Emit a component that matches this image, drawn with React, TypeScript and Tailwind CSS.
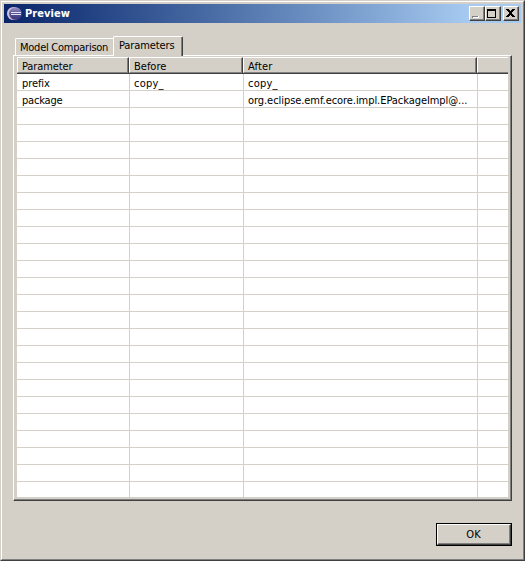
import React from 'react';

const labels = ['Parameter', 'Before', 'After', ''];
const values = [
  ['prefix', 'copy_', 'copy_', ''],
  ['package', '', 'org.eclipse.emf.ecore.impl.EPackageImpl@...', ''],
];
const rows = Array.from({ length: 25 }, (_, i) => values[i] ?? ['', '', '', '']);
const columns = 'grid grid-cols-[112px_114px_234px_31px]';
const spacing: Record<string, string> = {
  Parameter: 'tracking-[-0.12px]',
  Before: 'tracking-[0px]',
  After: 'tracking-[0.15px]',
  package: 'tracking-[-0.18px]',
  prefix: 'tracking-[-0.1px]',
  copy_: 'tracking-[0.2px]',
};

function Label({ text }: { text: string }) {
  return <span className={`block whitespace-pre ${spacing[text] ?? 'tracking-[-0.06px]'}`}>{text}</span>;
}

function CaptionButton({ children }: { children: React.ReactNode }) {
  return (
    <div className="h-[15px] w-4 border border-t-white border-l-white border-r-[#404040] border-b-[#404040] bg-[#d4d0c8]">
      <div className="h-full w-full border-r border-b border-[#808080]">
        <svg width="13" height="12" viewBox="0 0 13 12" shapeRendering="crispEdges" className="block">
          {children}
        </svg>
      </div>
    </div>
  );
}

function Logo() {
  return (
    <svg width="16" height="15" viewBox="0 0 16 15" className="block">
      <defs>
        <linearGradient id="sphere" x1="0" y1="0" x2="0" y2="1">
          <stop offset="0" stopColor="#9d96c8" />
          <stop offset="0.5" stopColor="#5b529a" />
          <stop offset="1" stopColor="#3a3478" />
        </linearGradient>
      </defs>
      <circle cx="6.6" cy="7.5" r="6.6" fill="#cfc3dc" />
      <circle cx="8.4" cy="7.5" r="6.3" fill="url(#sphere)" />
      <path d="M4 6h10v1H4zM4 8h10v1H4z" fill="#dfe4f6" />
    </svg>
  );
}

export default function App() {
  return (
    <div className="h-[561px] w-[525px] overflow-hidden border border-t-[#d4d0c8] border-l-[#d4d0c8] border-r-[#404040] border-b-[#404040] bg-[#d4d0c8] font-['DejaVu_Sans_Condensed','DejaVu_Sans',sans-serif] text-[11px] leading-[13px] text-black [font-stretch:condensed]">
      <div className="flex h-full flex-col border border-t-white border-l-white border-r-[#808080] border-b-[#808080] pt-0.5">
        <div className="mr-0.5 ml-0.5 flex h-[19px] shrink-0 items-start bg-linear-to-r from-[#0a246a] to-[#a6caf0] to-[90%] pt-0.5 pr-0.5 pl-[3px]">
          <Logo />
          <span className="mt-px ml-0.5 grow text-[11px] font-bold tracking-[0.05px] text-white">Preview</span>
          <CaptionButton>
            <path d="M2 9h6v2h-6z" fill="#808080" />
            <path d="M3 11h6v-2h-1v1h-5z" fill="#fff" />
            <path d="M2 9h6v1h-6z" fill="#808080" />
          </CaptionButton>
          <CaptionButton>
            <path d="M1 2h9v9h-9zM2 4v6h7v-6z" fillRule="evenodd" fill="#000" />
          </CaptionButton>
          <div className="ml-0.5">
            <CaptionButton>
              <path d="M2 2h3v1h1v1h1v-1h1v-1h3v1h-1v1h-1v1h-1v2h1v1h1v1h1v1h-3v-1h-1v-1h-1v1h-1v1h-3v-1h1v-1h1v-1h1v-2h-1v-1h-1v-1h-1z" fill="#000" />
            </CaptionButton>
          </div>
        </div>

        <div className="mt-[13px] flex h-5 shrink-0 items-end pl-[13px]">
          <div className="mb-px h-[17px] w-[98px] rounded-tl-[2px] border-t border-l border-white pt-[2px] pl-1">
            <span className="block whitespace-pre tracking-[-0.25px]">Model Comparison</span>
          </div>
          <div className="z-10 h-5 w-[70px] rounded-t-[2px] border-t border-r border-l border-t-white border-r-[#404040] border-l-white bg-[#d4d0c8]">
            <div className="h-full border-r border-[#808080] pt-[2px] pl-[5px]">
              <span className="block whitespace-pre tracking-[-0.1px]">Parameters</span>
            </div>
          </div>
        </div>

        <div className="-mt-px ml-[11px] h-[446px] w-[499px] shrink-0 border border-t-white border-l-white border-r-[#404040] border-b-[#404040]">
          <div className="h-full border-r border-b border-[#808080] pt-px pr-0.5 pb-0.5 pl-[3px]">
            <div className="h-[440px] w-[491px] overflow-hidden bg-white">
              <div className={`${columns} h-[17px] grid-rows-[17px] bg-[#d4d0c8]`}>
                {labels.map((text, i) => (
                  <div key={i} className={`border-t border-b border-t-white border-b-[#404040] ${i < 3 ? 'border-r border-r-[#404040]' : ''}`}>
                    <div className={`h-full border-b border-l border-b-[#808080] border-l-white pt-[2px] pl-1 ${i < 3 ? 'border-r border-r-[#808080]' : ''}`}>
                      <Label text={text} />
                    </div>
                  </div>
                ))}
              </div>
              {rows.map((row, r) => (
                <div key={r} className={`${columns} h-[17px] grid-rows-[16px] border-b border-[#d4d0c8]`}>
                  {row.map((text, i) => (
                    <div key={i} className={`pt-[3px] ${i ? 'border-l border-[#d4d0c8] pl-1' : 'pl-[5px]'}`}>
                      <Label text={text} />
                    </div>
                  ))}
                </div>
              ))}
            </div>
          </div>
        </div>

        <button className="mt-[22px] mr-[11px] h-[23px] w-[76px] shrink-0 self-end border border-black">
          <span className="block h-full border border-t-white border-l-white border-r-[#404040] border-b-[#404040]">
            <span className="flex h-full items-center justify-center border-r border-b border-[#808080]">OK</span>
          </span>
        </button>
      </div>
    </div>
  );
}
